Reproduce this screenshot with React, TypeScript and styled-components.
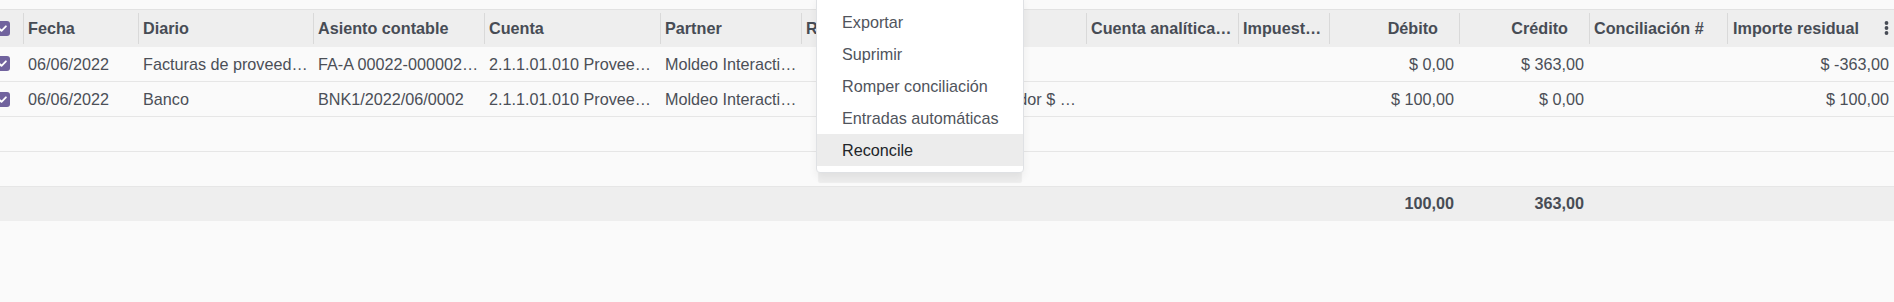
import styled, { createGlobalStyle } from "styled-components"

const GlobalStyle = createGlobalStyle`
  html, body {
    margin: 0;
    background: #fafafa;
  }
  body {
    font-family: "Liberation Sans", Arial, sans-serif;
    font-size: 16.2px;
    color: #4b4f57;
  }
`

const Page = styled.div`
  position: relative;
  height: 302px;
  padding-top: 9px;
  box-sizing: border-box;
  overflow: hidden;
`

const Table = styled.table`
  width: 1894px;
  table-layout: fixed;
  border-collapse: collapse;
`

const HeadRow = styled.tr`
  border-top: 1px solid #e2e2e2;
`

const HeadCell = styled.th<{ $num?: boolean; $pr?: number; $sep?: boolean }>`
  position: relative;
  height: 37px;
  padding: 0 ${(p) => p.$pr ?? 5}px 0 5px;
  box-sizing: border-box;
  text-align: ${(p) => (p.$num ? "right" : "left")};
  font-weight: 700;
  color: #474c55;
  background: #eeeeee;
  white-space: nowrap;
  overflow: hidden;
  text-overflow: ellipsis;

  &::before {
    content: "";
    display: ${(p) => (p.$sep ? "block" : "none")};
    position: absolute;
    left: 0;
    top: 3px;
    bottom: 3px;
    width: 1px;
    background: #d9d9d9;
  }
`

const Row = styled.tr`
  height: 35px;
  border-bottom: 1px solid #e6e6e6;
`

const Cell = styled.td<{ $num?: boolean }>`
  padding: 0 ${(p) => (p.$num ? 5 : 3)}px 0 5px;
  line-height: 20px;
  text-align: ${(p) => (p.$num ? "right" : "left")};
  white-space: nowrap;
  overflow: hidden;
  text-overflow: ellipsis;
`

const SelCell = styled.td`
  padding: 0;
  overflow: hidden;
`

const FootRow = styled.tr`
  height: 34px;
  background: #eeeeee;
`

const FootCell = styled.td<{ $num?: boolean }>`
  padding: 0 5px;
  text-align: ${(p) => (p.$num ? "right" : "left")};
  font-weight: 700;
  color: #474c55;
`

const Check = styled.span`
  display: flex;
  align-items: center;
  justify-content: center;
  width: 15px;
  height: 15px;
  margin-left: -5px;
  border-radius: 3px;
  background: #71639e;
`

const Kebab = styled.span`
  position: absolute;
  right: 5px;
  top: 11px;
  display: flex;
`

const Menu = styled.div`
  position: absolute;
  left: 816px;
  top: -3px;
  width: 208px;
  box-sizing: border-box;
  padding: 8px 0 6px;
  background: #ffffff;
  border: 1px solid #dfe1e4;
  border-radius: 0 0 4px 4px;
  box-shadow: 0 12px 1px -2px rgba(0, 0, 0, 0.05), 0 4px 8px rgba(0, 0, 0, 0.06);
`

const MenuItem = styled.div<{ $active?: boolean }>`
  height: 32px;
  display: flex;
  align-items: center;
  padding: 0 25px;
  white-space: nowrap;
  color: ${(p) => (p.$active ? "#212529" : "#50545c")};
  background: ${(p) => (p.$active ? "#ececec" : "transparent")};
`

const Box = () => (
  <Check>
    <svg width="11" height="11" viewBox="0 0 12 12">
      <path d="M2.5 6.2l2.4 2.4 4.8-5" fill="none" stroke="#fff" strokeWidth="2" strokeLinecap="round" strokeLinejoin="round" />
    </svg>
  </Check>
)

type Column = { key: string; label: string; w: number; num?: boolean; hpr?: number }

const columns: Column[] = [
  { key: "sel", label: "", w: 23 },
  { key: "date", label: "Fecha", w: 115 },
  { key: "journal", label: "Diario", w: 175 },
  { key: "move", label: "Asiento contable", w: 171 },
  { key: "account", label: "Cuenta", w: 176 },
  { key: "partner", label: "Partner", w: 141 },
  { key: "ref", label: "Referencia", w: 107 },
  { key: "name", label: "Etiqueta", w: 178 },
  { key: "analytic", label: "Cuenta analítica de la línea", w: 152 },
  { key: "tax", label: "Impuestos", w: 91, hpr: 6 },
  { key: "debit", label: "Débito", w: 130, num: true, hpr: 21 },
  { key: "credit", label: "Crédito", w: 130, num: true, hpr: 21 },
  { key: "rec", label: "Conciliación #", w: 138 },
  { key: "residual", label: "Importe residual", w: 167, num: true, hpr: 35 },
]

const rows: Record<string, string>[] = [
  {
    date: "06/06/2022",
    journal: "Facturas de proveedores",
    move: "FA-A 00022-00000234 (Moldeo Interactive)",
    account: "2.1.1.01.010 Proveedores",
    partner: "Moldeo Interactive S.A.",
    ref: "",
    name: "",
    analytic: "",
    tax: "",
    debit: "$ 0,00",
    credit: "$ 363,00",
    rec: "",
    residual: "$ -363,00",
  },
  {
    date: "06/06/2022",
    journal: "Banco",
    move: "BNK1/2022/06/0002",
    account: "2.1.1.01.010 Proveedores",
    partner: "Moldeo Interactive S.A.",
    ref: "",
    name: "Pago a proveedor $ 100,00 - Moldeo Interactive",
    analytic: "",
    tax: "",
    debit: "$ 100,00",
    credit: "$ 0,00",
    rec: "",
    residual: "$ 100,00",
  },
]

const totals: Record<string, string> = { debit: "100,00", credit: "363,00" }

const actions = ["Exportar", "Suprimir", "Romper conciliación", "Entradas automáticas", "Reconcile"]

export default function App() {
  return (
    <>
      <GlobalStyle />
      <Page>
        <Table>
          <colgroup>
            {columns.map((c) => (
              <col key={c.key} style={{ width: c.w }} />
            ))}
          </colgroup>
          <thead>
            <HeadRow>
              {columns.map((c, i) =>
                c.key === "sel" ? (
                  <HeadCell key={c.key} $pr={0} style={{ padding: 0 }}>
                    <Box />
                  </HeadCell>
                ) : (
                  <HeadCell key={c.key} $sep={c.key !== "name"} $num={c.num} $pr={c.hpr}>
                    {c.label}
                    {i === columns.length - 1 && (
                      <Kebab>
                        <svg width="5" height="14" viewBox="0 0 5 14">
                          <circle cx="2.5" cy="2" r="1.9" fill="#474c55" />
                          <circle cx="2.5" cy="7" r="1.9" fill="#474c55" />
                          <circle cx="2.5" cy="12" r="1.9" fill="#474c55" />
                        </svg>
                      </Kebab>
                    )}
                  </HeadCell>
                )
              )}
            </HeadRow>
          </thead>
          <tbody>
            {rows.map((r, ri) => (
              <Row key={ri}>
                {columns.map((c) =>
                  c.key === "sel" ? (
                    <SelCell key={c.key}>
                      <Box />
                    </SelCell>
                  ) : (
                    <Cell key={c.key} $num={c.num}>
                      {r[c.key]}
                    </Cell>
                  )
                )}
              </Row>
            ))}
            {[0, 1].map((i) => (
              <Row key={"empty" + i}>
                <Cell colSpan={columns.length}>&nbsp;</Cell>
              </Row>
            ))}
          </tbody>
          <tfoot>
            <FootRow>
              {columns.map((c) => (
                <FootCell key={c.key} $num={c.num}>
                  {totals[c.key] ?? ""}
                </FootCell>
              ))}
            </FootRow>
          </tfoot>
        </Table>
        <Menu>
          {actions.map((a) => (
            <MenuItem key={a} $active={a === "Reconcile"}>
              {a}
            </MenuItem>
          ))}
        </Menu>
      </Page>
    </>
  )
}
